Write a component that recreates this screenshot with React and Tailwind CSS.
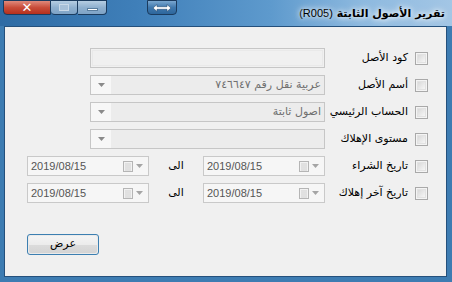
import React from 'react';

const ar = { fontFamily: '"DejaVu Sans", "Liberation Sans", sans-serif' };
const lat = { fontFamily: '"Liberation Sans", "DejaVu Sans", sans-serif' };

function Arrow({ color = '#8a8a8a' }) {
  return (
    <svg width="7" height="4" viewBox="0 0 7 4">
      <path d="M0 0h7L3.5 4z" fill={color} />
    </svg>
  );
}

function Check() {
  return (
    <div className="w-[13px] h-[13px] shrink-0 border border-[#a9a9a9] p-[1px] bg-[#f4f4f4]">
      <div className="w-full h-full border border-[#e2e2e2] bg-[linear-gradient(135deg,#d9d9d9,#f6f6f6)]" />
    </div>
  );
}

function Label({ children }) {
  return (
    <div className="w-[90px] shrink-0 pr-[7px] text-[11px] text-black whitespace-nowrap" style={ar}>
      {children}
    </div>
  );
}

function Combo({ text }) {
  return (
    <div className="w-[235px] h-[20px] shrink-0 flex border border-[#c6c6c6] bg-[#ececec]">
      <div className="flex-1 flex items-center pr-[3px] text-[11px] text-[#6f6f6f] whitespace-nowrap overflow-hidden" style={ar}>
        {text}
      </div>
      <div className="w-[20px] flex items-center justify-center bg-[#f7f7f7]">
        <Arrow />
      </div>
    </div>
  );
}

function DateBox() {
  return (
    <div dir="ltr" className="w-[122px] h-[20px] shrink-0 flex items-center border border-[#c9c9c9] bg-[#f6f6f6] pl-[3px] pr-[5px]">
      <span className="flex-1 text-[11px] text-[#555]" style={lat}>2019/08/15</span>
      <svg width="10" height="11" viewBox="0 0 10 11" className="mr-[3px]">
        <rect x="0.5" y="0.5" width="9" height="10" fill="#f2f2f2" stroke="#b5b5b5" />
        <path d="M2 3h6M2 5h6M2 7h6M2 9h6" stroke="#cfcfcf" />
      </svg>
      <Arrow color="#a5a5a5" />
    </div>
  );
}

function Row({ children }) {
  return <div className="h-[20px] flex items-center">{children}</div>;
}

function Frame({ children, className }) {
  return <div className={'h-[15px] flex items-center justify-center border border-[#1b3b5e] rounded-b-[4px] ' + className}>{children}</div>;
}

export default function App() {
  return (
    <div dir="ltr" className="w-[452px] h-[282px] flex flex-col bg-[#3d7cb2] overflow-hidden select-none">
      <div className="h-[26px] shrink-0 flex items-start bg-[linear-gradient(to_right,#2e6ba4,#3f7fb9_30%,#5e9acd_60%,#8db9df_80%,#a3c6e5)]">
        <div className="ml-[3px] flex">
          <Frame className="w-[48px] rounded-br-none bg-[linear-gradient(#e08a7c,#c94d3a_50%,#b5301d)]">
            <span className="text-white text-[13px] font-bold leading-none" style={lat}>✕</span>
          </Frame>
          <Frame className="w-[27px] rounded-none border-l-0 bg-[linear-gradient(#b6cde2,#8fb0cf_50%,#7ea3c6)]">
            <div className="w-[10px] h-[7px] border border-[#c9d9e8] bg-[#a7c0d8]" />
          </Frame>
          <Frame className="w-[29px] rounded-bl-none border-l-0 bg-[linear-gradient(#b6cde2,#8fb0cf_50%,#7ea3c6)]">
            <div className="w-[11px] h-[3px] bg-white border border-[#5a7e9f] mt-[4px]" />
          </Frame>
        </div>
        <Frame className="ml-[40px] w-[30px] bg-[linear-gradient(#7aa7d0,#3f78ad_50%,#2d669c)]">
          <svg width="20" height="8" viewBox="0 0 20 8">
            <path d="M1 4l4-3.5v2.2h10V0.5l4 3.5-4 3.5V5.3H5v2.2z" fill="#fff" stroke="#2a4f75" strokeWidth="0.6" />
          </svg>
        </Frame>
        <div className="flex-1" />
        <div dir="rtl" className="mr-[7px] mt-[5px] text-[11px] font-semibold text-black whitespace-nowrap [text-shadow:0_0_5px_#fff,0_0_8px_#fff]" style={ar}>
          تقرير الأصول الثابتة <span className="font-normal" style={lat}>(R005)</span>
        </div>
      </div>

      <div className="flex-1 flex pl-[4px] pr-[5px] pb-[5px]">
        <div dir="rtl" className="flex-1 flex flex-col border border-[#24507c] bg-[#f0f0f0] pt-[21px] pr-[18px]">
          <div className="flex flex-col gap-[7px]">
            <Row>
              <Check />
              <Label>كود الأصل</Label>
              <div className="w-[235px] h-[20px] border border-[#c6c6c6] bg-[#f0f0f0] p-[1px]">
                <div className="w-full h-full border border-[#e9e9e9]" />
              </div>
            </Row>
            <Row>
              <Check />
              <Label>أسم الأصل</Label>
              <Combo text="عربية نقل رقم ٧٤٦٦٤٧" />
            </Row>
            <Row>
              <Check />
              <Label>الحساب الرئيسي</Label>
              <Combo text="اصول ثابتة" />
            </Row>
            <Row>
              <Check />
              <Label>مستوى الإهلاك</Label>
              <Combo text="" />
            </Row>
            <Row>
              <Check />
              <Label>تاريخ الشراء</Label>
              <DateBox />
              <div className="w-[54px] text-center text-[11px] text-black" style={ar}>الى</div>
              <DateBox />
            </Row>
            <Row>
              <Check />
              <Label>تاريخ آخر إهلاك</Label>
              <DateBox />
              <div className="w-[54px] text-center text-[11px] text-black" style={ar}>الى</div>
              <DateBox />
            </Row>
          </div>
          <div className="mt-[31px] flex justify-end pl-[22px]">
            <button className="w-[72px] h-[21px] rounded-[3px] border border-[#3c7fb1] p-[1px] bg-[#eaeaea]">
              <div className="w-full h-full rounded-[2px] flex items-center justify-center text-[11px] text-black bg-[linear-gradient(#f4f4f4,#ececec_50%,#dcdcdc_51%,#d4d4d4)]" style={ar}>
                عرض
              </div>
            </button>
          </div>
        </div>
      </div>
    </div>
  );
}
